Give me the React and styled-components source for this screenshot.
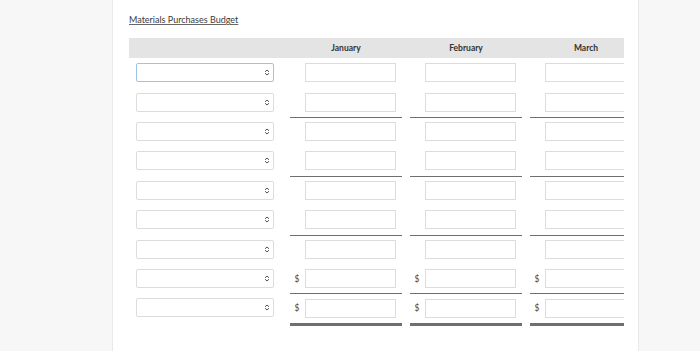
import React from "react";
import styled, { createGlobalStyle } from "styled-components";

const GlobalStyle = createGlobalStyle`
  html, body {
    margin: 0;
    padding: 0;
    background: #f7f7f7;
    font-family: Lato, "Open Sans", sans-serif;
  }
`;

const Page = styled.div`
  display: flex;
  width: 700px;
  height: 351px;
  overflow: hidden;
`;

const Side = styled.div`
  width: ${(p) => p.$width}px;
  flex-shrink: 0;
  background: #f7f7f7;
`;

const Panel = styled.div`
  width: 527px;
  flex-shrink: 0;
  background: #fff;
  border-left: 1px solid #e9e9e9;
  border-right: 1px solid #e9e9e9;
  padding: 14px 16px 0;
  box-sizing: border-box;
`;

const Title = styled.div`
  font-size: 9px;
  color: #3a3a3a;
  text-decoration: underline;
  text-decoration-color: #666;
  text-underline-offset: 1px;
  height: 12px;
  line-height: 12px;
  margin-bottom: 12px;
`;

const Table = styled.div`
  width: 495px;
  overflow: hidden;
  padding-bottom: 6px;
`;

const Grid = styled.div`
  display: grid;
  grid-template-columns: 157px repeat(3, 120px);
  width: 517px;
`;

const HeaderBar = styled.div`
  display: contents;
`;

const HeadCell = styled.div`
  height: 20px;
  background: #e4e4e4;
  font-size: 8.5px;
  font-weight: 700;
  color: #333;
  display: flex;
  align-items: center;
  justify-content: center;
`;

const FirstCell = styled.div`
  height: 29.4px;
  display: flex;
  align-items: center;
  padding-left: 7px;
`;

const Select = styled.div`
  width: 138px;
  height: 19px;
  box-sizing: border-box;
  border: 1px solid ${(p) => (p.$active ? "#9fc3e6" : "#dcdcdc")};
  border-radius: 2px;
  background: #fff;
  display: flex;
  align-items: center;
  justify-content: flex-end;
  padding-right: 3px;
`;

const MonthCell = styled.div`
  height: 29.4px;
  padding: 0 4px;
  box-sizing: border-box;
  display: flex;
  align-items: flex-start;
`;

const lineStyles = {
  sub: "border-bottom: 1px solid #6f6f6f; margin-bottom: -1.2px; height: 30.6px;",
  total: "border-bottom: 3px solid #6f6f6f; margin-bottom: -3.4px; height: 32.8px;",
};

const CellInner = styled.div`
  flex: 1;
  display: flex;
  align-items: center;
  box-sizing: border-box;
  height: 29.4px;
  ${(p) => lineStyles[p.$line] || ""}
`;

const Dollar = styled.span`
  width: 15px;
  font-size: 8.5px;
  color: #444;
  text-align: center;
  padding-right: 1px;
  box-sizing: border-box;
`;

const Input = styled.div`
  width: 91px;
  height: 19px;
  box-sizing: border-box;
  border: 1px solid #dcdcdc;
  background: #fff;
  margin-left: ${(p) => (p.$dollar ? "0" : "15px")};
`;

const Arrows = () => (
  <svg width="6" height="7" viewBox="0 0 6 7">
    <path d="M1 2.8 L3 1 L5 2.8 M1 4.2 L3 6 L5 4.2" fill="none" stroke="#555" strokeWidth="1" />
  </svg>
);

const rows = [
  { line: null, dollar: false },
  { line: "sub", dollar: false },
  { line: null, dollar: false },
  { line: "sub", dollar: false },
  { line: null, dollar: false },
  { line: "sub", dollar: false },
  { line: null, dollar: false },
  { line: "sub", dollar: true },
  { line: "total", dollar: true },
];

const months = ["January", "February", "March"];

export default function App() {
  return (
    <>
      <GlobalStyle />
      <Page>
        <Side $width={112} />
        <Panel>
          <Title>Materials Purchases Budget</Title>
          <Table>
            <Grid>
              <HeaderBar>
                <HeadCell />
                {months.map((m) => (
                  <HeadCell key={m}>{m}</HeadCell>
                ))}
              </HeaderBar>
              {rows.map((r, i) => (
                <React.Fragment key={i}>
                  <FirstCell>
                    <Select $active={i === 0}>
                      <Arrows />
                    </Select>
                  </FirstCell>
                  {months.map((m) => (
                    <MonthCell key={m}>
                      <CellInner $line={r.line}>
                        {r.dollar && <Dollar>$</Dollar>}
                        <Input $dollar={r.dollar} />
                      </CellInner>
                    </MonthCell>
                  ))}
                </React.Fragment>
              ))}
            </Grid>
          </Table>
        </Panel>
        <Side $width={61} />
      </Page>
    </>
  );
}
